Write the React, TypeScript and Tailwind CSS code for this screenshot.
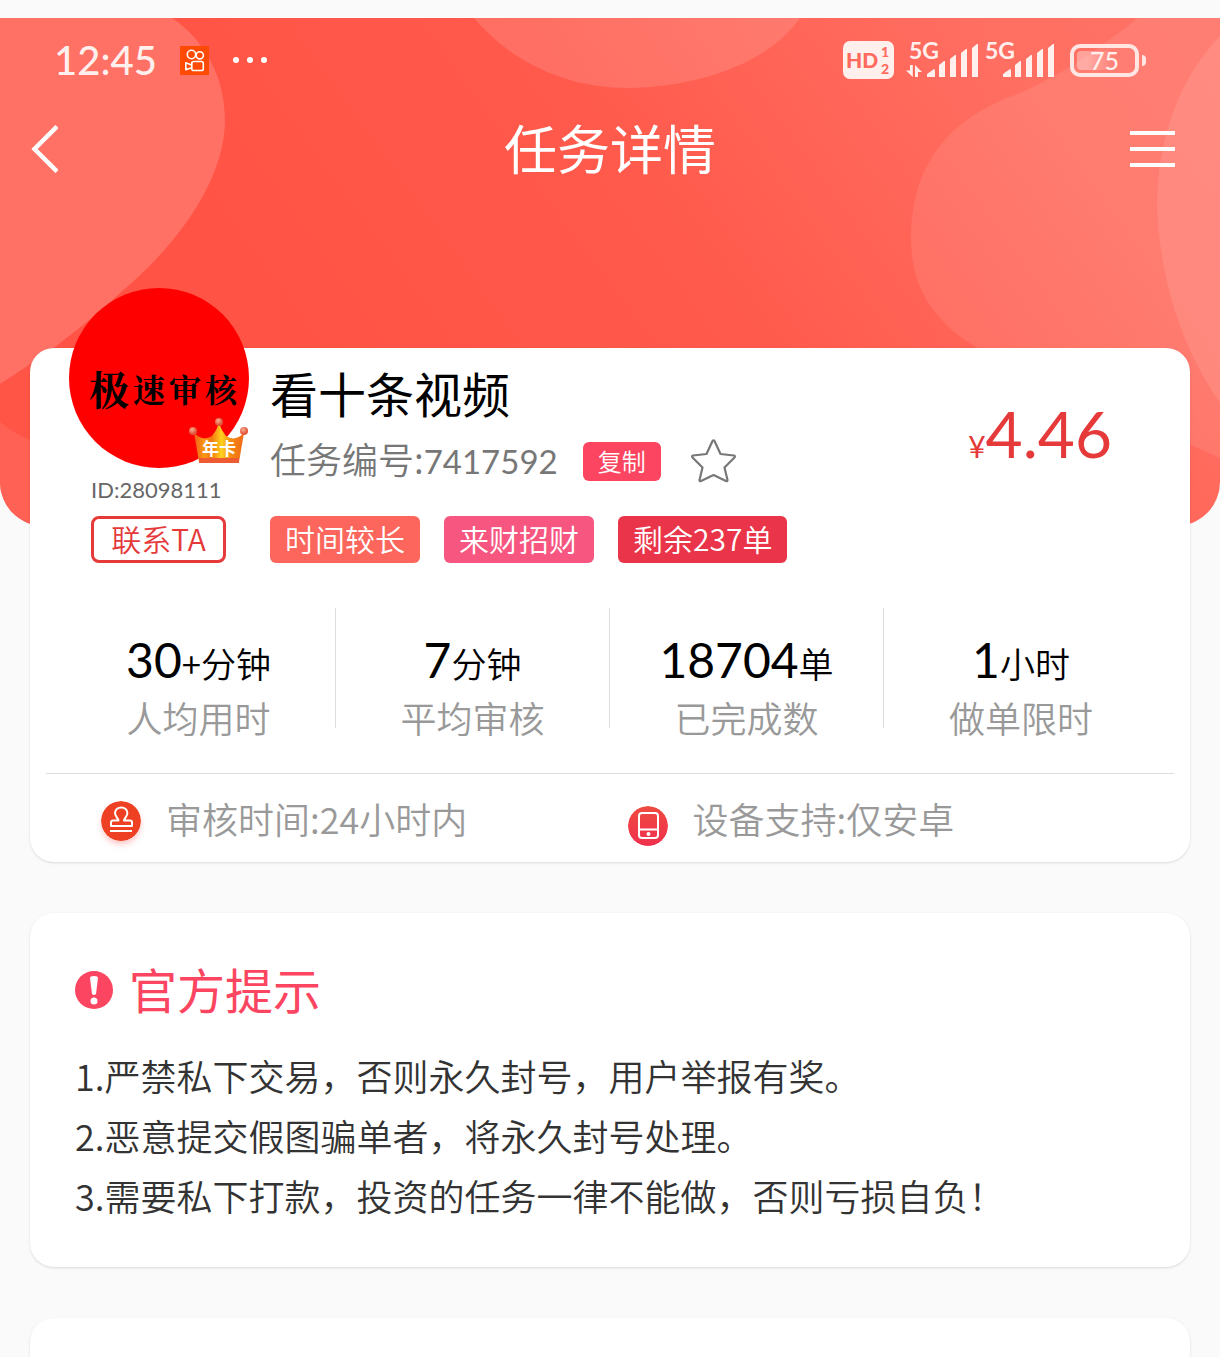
import type { ReactNode } from "react";

interface Stat {
  value: string;
  unit: string;
  label: string;
}

interface Tag {
  text: string;
  className: string;
}

const stats: Stat[] = [
  { value: "30", unit: "+分钟", label: "人均用时" },
  { value: "7", unit: "分钟", label: "平均审核" },
  { value: "18704", unit: "单", label: "已完成数" },
  { value: "1", unit: "小时", label: "做单限时" },
];

const tags: Tag[] = [
  { text: "时间较长", className: "bg-[#fc665c]" },
  { text: "来财招财", className: "bg-[#f65680]" },
  { text: "剩余237单", className: "bg-[#ea3449]" },
];

const notices = [
  "1.严禁私下交易，否则永久封号，用户举报有奖。",
  "2.恶意提交假图骗单者，将永久封号处理。",
  "3.需要私下打款，投资的任务一律不能做，否则亏损自负！",
];

function HeroBackground() {
  return (
    <svg
      className="absolute inset-x-0 top-0 -z-10 h-[508px] w-full rounded-b-[44px]"
      viewBox="0 0 1220 508"
      preserveAspectRatio="none"
      aria-hidden="true"
    >
      <defs>
        <linearGradient id="hero" x1="0" y1="0.4" x2="1" y2="0.1">
          <stop offset="0.15" stopColor="#ff5345" />
          <stop offset="0.5" stopColor="#ff5a4c" />
          <stop offset="0.85" stopColor="#ff6f62" />
          <stop offset="1" stopColor="#ff7266" />
        </linearGradient>
      </defs>
      <rect width="1220" height="508" fill="url(#hero)" />
      <path d="M0 0H172C205 22 225 60 225 102C225 160 180 225 120 275C80 312 35 345 0 366Z" fill="#ff7164" />
      <path d="M0 366V404C10 412 20 418 30 422V346C20 353 10 360 0 366Z" fill="#ff5546" />
      <path d="M0 404C10 412 20 418 30 422V508H0Z" fill="#ff6154" />
      <path d="M474 0C512 45 568 71 632 70C702 68 768 45 800 0Z" fill="#fff" fillOpacity="0.13" />
      <path d="M1138 0C1100 30 1060 58 1020 75C955 98 911 140 911 222C911 270 935 306 978 330L1220 440V0Z" fill="#fff" fillOpacity="0.09" />
      <path d="M1220 18C1180 60 1157 118 1157 190C1160 250 1175 320 1220 385Z" fill="#fff" fillOpacity="0.1" />
    </svg>
  );
}

function VideoAppIcon() {
  return (
    <svg className="size-[29px]" viewBox="0 0 29 29" fill="none" stroke="#fff" strokeWidth="1.6" aria-hidden="true">
      <rect width="29" height="29" fill="#ff4a04" stroke="none" />
      <circle cx="11.5" cy="8.5" r="4.2" />
      <circle cx="19.8" cy="9.3" r="3.6" />
      <rect x="11.8" y="15.5" width="11.5" height="9" rx="1.8" />
      <path d="M11.5 19 5.8 16.8v7l5.700-2" strokeLinejoin="round" />
    </svg>
  );
}

function SignalIcon({ withData }: { withData?: boolean }) {
  return (
    <svg className="h-[54px] w-[74px]" viewBox="0 -8 74 54" fill="#fff0ee" aria-hidden="true">
      <text x="3" y="18" fontFamily="Lato, sans-serif" fontWeight="700" fontSize="23">
        5G
      </text>
      {withData && (
        <path d="M4 24h2.800v12L0 29.500h4zM9 36V24l7 7h-4v5z" />
      )}
      <path d="M21 36v-3l7-5q1 0 1 2v6zM33 36V24l5-4h1v16zM44 36V18l5-4h1v22zM55 36V12l5-4h1v28zM66 36V7l5-4h1v33z" />
    </svg>
  );
}

function HdBadge() {
  return (
    <svg className="h-[38px] w-[51px]" viewBox="0 0 51 38" fill="#ff6a5d" fontFamily="Lato, sans-serif" fontWeight="900" aria-hidden="true">
      <rect width="51" height="38" rx="7" fill="#fff0ee" />
      <text x="3" y="27" fontSize="21">HD</text>
      <text x="38" y="16" fontSize="14">1</text>
      <text x="38" y="33" fontSize="14">2</text>
    </svg>
  );
}

function StatusBar() {
  return (
    <div className="flex h-[84px] items-center justify-between pr-[74px] pl-[54px] text-[#fff0ee]">
      <div className="flex items-center">
        <time className="w-[126px] font-[Lato] text-[40px] leading-none font-medium">12:45</time>
        <VideoAppIcon />
        <div className="ml-6 flex gap-2">
          <span className="size-[6px] rounded-full bg-white" />
          <span className="size-[6px] rounded-full bg-white" />
          <span className="size-[6px] rounded-full bg-white" />
        </div>
      </div>
      <div className="flex items-center">
        <HdBadge />
        <div className="ml-3 flex gap-[2px]">
          <SignalIcon withData />
          <SignalIcon />
        </div>
        <div className="ml-[14px] flex items-center gap-[3px]">
          <div className="flex h-[33px] w-[69px] items-center justify-center rounded-[10px] border-4 border-[#ffe6e2] p-[3px]">
            <span className="flex h-full w-full items-center justify-center rounded-[4px] bg-linear-to-r from-white/35 from-20% to-transparent to-70% font-[Lato] text-[25px] leading-none font-medium">
              75
            </span>
          </div>
          <span className="h-[11px] w-1 rounded-r bg-[#ffe6e2]" />
        </div>
      </div>
    </div>
  );
}

function NavBar() {
  return (
    <header className="flex h-[94px] items-center justify-between px-[30px] text-white">
      <button type="button" aria-label="返回" className="w-[60px]">
        <svg className="h-12 w-7" viewBox="0 0 28 48" fill="none" stroke="currentColor" strokeWidth="4.5">
          <path d="M27 1.500 4.500 24 27 46.500" />
        </svg>
      </button>
      <h1 className="pb-1 text-[53px] leading-none font-normal">任务详情</h1>
      <button type="button" aria-label="菜单" className="flex w-[60px] flex-col items-start gap-3">
        <span className="h-1 w-[45px] bg-white" />
        <span className="h-1 w-[45px] bg-white" />
        <span className="h-1 w-[45px] bg-white" />
      </button>
    </header>
  );
}

function Crown() {
  return (
    <svg className="absolute right-0 bottom-0 h-[50px] w-[60px]" viewBox="0 0 60 50" aria-hidden="true">
      <defs>
        <linearGradient id="crown" x1="0" x2="1">
          <stop offset="0" stopColor="#ef5a1c" />
          <stop offset="0.2" stopColor="#fb9a12" />
          <stop offset="0.35" stopColor="#f4780f" />
          <stop offset="0.55" stopColor="#ffd21e" />
          <stop offset="0.75" stopColor="#f5860f" />
          <stop offset="1" stopColor="#f06a1c" />
        </linearGradient>
        <radialGradient id="pearl" cx="0.4" cy="0.35">
          <stop offset="0" stopColor="#f9b096" />
          <stop offset="1" stopColor="#e2553a" />
        </radialGradient>
      </defs>
      <path d="M5 15Q14 24 23 18Q28 12 30 5Q32 12 37 18Q46 24 55 15L50 44H10Z" fill="url(#crown)" />
      <path d="M10 40h40v5H10z" fill="#ee5a32" />
      <circle cx="4" cy="13" r="4" fill="url(#pearl)" />
      <circle cx="30" cy="4" r="4" fill="url(#pearl)" />
      <circle cx="55" cy="13" r="4" fill="url(#pearl)" />
      <text x="30" y="37" textAnchor="middle" fontSize="17" fontWeight="700" fill="#fff">
        年卡
      </text>
    </svg>
  );
}

function StampIcon() {
  return (
    <svg className="mt-[6px] size-10 rounded-full shadow-md shadow-red-200" viewBox="0 0 40 40" fill="none" stroke="#fff" strokeWidth="2" aria-hidden="true">
      <circle cx="20" cy="20" r="20" fill="#ee4123" stroke="none" />
      <path d="M17.500 19.500C17 17 14 15.500 14 12a6.200 5.500 0 0 1 12.400 0C26.400 15.500 23.500 17 23 19.500h6q2 0 2 2V25H10v-3.500q0-2 2-2zM9 30h22" strokeLinejoin="round" />
    </svg>
  );
}

function PhoneIcon() {
  return (
    <svg className="mt-4 size-10 rounded-full" viewBox="0 0 40 40" fill="none" stroke="#fff" strokeWidth="2" aria-hidden="true">
      <defs>
        <linearGradient id="phone" x2="0" y2="1">
          <stop offset="0" stopColor="#ef4a40" />
          <stop offset="1" stopColor="#f0304e" />
        </linearGradient>
      </defs>
      <circle cx="20" cy="20" r="20" fill="url(#phone)" stroke="none" />
      <rect x="11" y="7" width="19" height="25" rx="3" />
      <path d="M11 23.500h19" />
      <circle cx="20.5" cy="28" r="1" />
    </svg>
  );
}

function StatItem({ value, unit, label }: Stat) {
  return (
    <div className="flex h-[120px] flex-col items-center pt-7 text-center">
      <dd className="order-first text-[35px] leading-[54px] whitespace-nowrap text-black">
        <span className="font-[Lato] text-5xl font-normal">{value}</span>
        {unit}
      </dd>
      <dt className="text-[36px] leading-[54px] text-[#999]">{label}</dt>
    </div>
  );
}

function InfoItem({ icon, children }: { icon: ReactNode; children: ReactNode }) {
  return (
    <div className="flex flex-1 items-center gap-[25px]">
      {icon}
      <span>{children}</span>
    </div>
  );
}

function TaskCard() {
  return (
    <section className="mx-[30px] mt-[152px] rounded-[24px] bg-white shadow">
      <div className="flex pt-4 pr-[78px] pl-[39px]">
        <div className="-mt-[76px] flex w-[180px] shrink-0 flex-col items-start">
          <div className="relative flex size-[180px] items-center justify-center rounded-full bg-[#fe0000] pt-5">
            <span className="flex items-center gap-1 pl-2 font-[Noto_Serif_CJK_SC,Noto_Sans_CJK_SC] leading-none font-bold text-black">
              <span className="text-[40px]">极</span>
              <span className="text-[32px]">速</span>
              <span className="text-[32px]">审</span>
              <span className="text-[32px]">核</span>
            </span>
            <Crown />
          </div>
          <p className="ml-[22px] pt-[6px] font-[Lato] text-[22px] leading-8 font-normal text-[#666]">ID:28098111</p>
          <button type="button" className="mt-[10px] ml-[22px] h-[47px] w-[135px] rounded-lg border-3 border-[#e5393a] pb-1 text-[30px] leading-none text-[#e5393a]">
            联系TA
          </button>
        </div>
        <div className="ml-[21px] flex-1">
          <h2 className="text-5xl leading-14 font-normal text-black">看十条视频</h2>
          <div className="flex h-[82px] items-center">
            <span className="pb-1 text-[36px] leading-none text-[#777]">
              任务编号:<span className="font-[Lato] text-[33px] font-normal">7417592</span>
            </span>
            <button type="button" className="ml-[25px] h-[39px] w-[78px] rounded-md bg-[#fc4560] text-2xl leading-none text-white">
              复制
            </button>
            <button type="button" aria-label="收藏" className="ml-[30px]">
              <svg className="h-11 w-[45px]" viewBox="0 0 45 44" fill="none" stroke="#777" strokeWidth="2.2" strokeLinejoin="round">
                <path d="M21.500 2q1-1.500 2 0l6 13 13.500 1.500q1.500.5.500 2L33.500 28.500l3 12.500q0 1.500-1.500 1L22.500 36 10 42q-1.500.5-1.500-1l3-12.500L1.500 18.500q-1-1.500.5-2L15.500 15z" />
              </svg>
            </button>
          </div>
          <ul className="mt-[14px] flex gap-6">
            {tags.map((tag) => (
              <li
                key={tag.text}
                className={`flex h-[47px] items-center rounded-md px-[15px] pb-[2px] text-[30px] whitespace-nowrap text-white ${tag.className}`}
              >
                {tag.text}
              </li>
            ))}
          </ul>
        </div>
        <p className="mt-[38px] h-16 font-[Lato] leading-16 font-normal text-[#e5393a]">
          <span className="text-[30px]">¥</span>
          <span className="text-[64px]">4.46</span>
        </p>
      </div>

      <dl className="mx-8 mt-[45px] grid grid-cols-4 divide-x divide-[#ddd]">
        {stats.map((stat) => (
          <StatItem key={stat.label} {...stat} />
        ))}
      </dl>

      <div className="mx-4 mt-[45px] flex h-[89px] items-center border-t border-[#ddd] pr-5 pl-[55px] text-[36px] text-[#999]">
        <InfoItem icon={<StampIcon />}>审核时间:24小时内</InfoItem>
        <InfoItem icon={<PhoneIcon />}>设备支持:仅安卓</InfoItem>
      </div>
    </section>
  );
}

function NoticeCard() {
  return (
    <section className="mx-[30px] mt-[51px] rounded-[24px] bg-white px-[45px] pt-[45px] pb-[42px] shadow">
      <h2 className="flex items-center gap-4 text-5xl leading-16 font-normal text-[#fc4560]">
        <svg className="size-[38px]" viewBox="0 0 38 38" aria-hidden="true">
          <circle cx="19" cy="19" r="19" fill="#fc4560" />
          <path d="M15 7q0-2 4-2t4 2l-2 16q-2 2-4 0z" fill="#fff" />
          <circle cx="19" cy="30" r="3.5" fill="#fff" />
        </svg>
        <span className="pb-1 leading-15">官方提示</span>
      </h2>
      <div className="mt-[23px] text-[36px] leading-[60px] text-[#333]">
        {notices.map((notice) => (
          <p key={notice}>{notice}</p>
        ))}
      </div>
    </section>
  );
}

function App() {
  return (
    <div className="min-h-screen overflow-hidden bg-[#fafafa] pt-[18px] font-['Noto_Sans_CJK_SC',sans-serif] font-[350]">
      <main className="relative isolate">
        <HeroBackground />
        <StatusBar />
        <NavBar />
        <TaskCard />
        <NoticeCard />
        <section className="mx-[30px] mt-[51px] h-[100px] rounded-[24px] bg-white shadow" />
      </main>
    </div>
  );
}

export default App;
